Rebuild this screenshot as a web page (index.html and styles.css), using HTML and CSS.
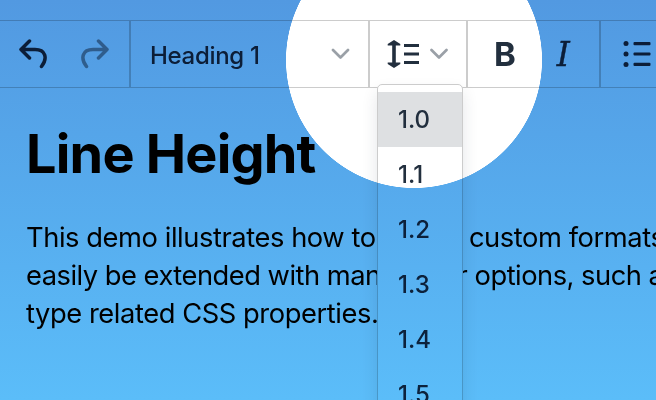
FILE: index.html
```html
<!DOCTYPE html>
<html lang="en">
<head>
<meta charset="utf-8">
<title>Line Height</title>
<link rel="stylesheet" href="styles.css">
</head>
<body>
<div class="stage">
  <div class="editor">
    <div class="toolbar">
      <div class="group history">
        <svg class="icon" width="30" height="32" viewBox="0 0 30 32"><path d="M11.500 3 3 11.500l8.500 8.500M3 11.500h14c10.500 0 13 8.500 6.500 17"/></svg>
        <svg class="icon faded" width="30" height="32" viewBox="0 0 30 32"><path d="M18.500 3 27 11.500 18.500 20M27 11.500H13c-10.500 0-13 8.500-6.500 17"/></svg>
      </div>
      <div class="group format">
        <span class="format-label">Heading 1</span>
        <svg class="chevron" width="20" height="14" viewBox="0 0 20 14"><path d="m3 3 7.500 7.500L18 3"/></svg>
      </div>
      <div class="group spacing">
        <svg class="solid" width="34" height="32" viewBox="0 0 34 32"><path d="M7 2 13.300 6v1.500H8.800v17h4.500V26L7 30 .700 26v-1.500h4.500v-17H.700V6zM17 6h15v3H17zM17 14.500h15v3H17zM17 23h15v3H17z"/></svg>
        <svg class="chevron" width="20" height="14" viewBox="0 0 20 14"><path d="m2.500 3 7.500 7.500L17.500 3"/></svg>
        <div class="menu">
          <div class="item selected">1.0</div>
          <div class="item">1.1</div>
          <div class="item">1.2</div>
          <div class="item">1.3</div>
          <div class="item">1.4</div>
          <div class="item">1.5</div>
        </div>
      </div>
      <div class="group styles">
        <span class="bold">B</span>
        <span class="italic">I</span>
      </div>
      <div class="group lists">
        <svg class="solid" width="30" height="28" viewBox="0 0 30 28"><circle cx="3" cy="3.500" r="2.500"/><circle cx="3" cy="14" r="2.500"/><circle cx="3" cy="24.500" r="2.500"/><rect x="10.500" y="2" width="17" height="3.200" rx="1"/><rect x="10.500" y="12.400" width="17" height="3.200" rx="1"/><rect x="10.500" y="22.800" width="17" height="3.200" rx="1"/></svg>
      </div>
    </div>
    <div class="content">
      <h1>Line Height</h1>
      <p><span class="line l1">This demo illustrates how to define custom formats</span><span class="line l2">easily be extended with many other options, such as</span><span class="line l3">type related CSS properties.</span></p>
    </div>
  </div>
</div>
</body>
</html>
```
FILE: styles.css
```css
* { box-sizing: border-box; }
body { margin: 0; font-family: Inter, "Liberation Sans", sans-serif; }
.stage {
  width: 656px; height: 400px; overflow: hidden; isolation: isolate;
  background: radial-gradient(circle at 414px 60px, #fff 127.700px, transparent 128.300px), linear-gradient(#5299e1, #5bbdf9);
}
.editor { height: 400px; padding-top: 20px; background: #fff; mix-blend-mode: multiply; overflow: hidden; }
.toolbar { display: flex; height: 68px; border: solid #ccc; border-width: 1.500px 0; color: #222f3e; }
.group { display: flex; align-items: center; flex: none; border-right: 2px solid #ccc; }
.history { width: 131px; padding-left: 17.500px; gap: 32px; }
.format { width: 239px; padding: 0 18px 0 19px; justify-content: space-between; }
.format-label { font-size: 24px; font-weight: 450; letter-spacing: -.3px; padding-top: 2px; }
.spacing { width: 98px; padding-left: 17px; gap: 8px; position: relative; }
.styles { width: 133px; padding-left: 26px; gap: 41px; }
.lists { padding-left: 22px; border: 0; }
.icon, .chevron { fill: none; stroke: #222f3e; stroke-width: 3.500; stroke-linecap: round; stroke-linejoin: round; }
.icon.faded { opacity: .5; }
.chevron { stroke-width: 2.700; opacity: .45; }
.solid { fill: #222f3e; }
.bold { font-size: 33px; font-weight: 650; }
.italic { font: italic 33px "DejaVu Serif", serif; -webkit-text-stroke: .4px #222f3e; }
.menu {
  position: absolute; left: 7px; top: 63px; width: 86px; padding-top: 7px; z-index: 1;
  background: #fff; border: 1.500px solid #ccc; border-radius: 5px; box-shadow: 0 8px 16px rgba(34,47,62,.12);
}
.item { height: 55px; line-height: 55px; padding-left: 20px; font-size: 24px; font-weight: 450; }
.selected { background: #dee0e2; }
.content { padding: 0 26px; color: #000; }
h1 { margin: 32px 0 0; font-size: 54px; line-height: 68px; font-weight: 700; letter-spacing: -.8px; white-space: nowrap; }
p { margin: 31px 0 0; font-size: 27.300px; line-height: 38px; letter-spacing: -.43px; white-space: nowrap; }
.line { display: block; }
.l2 { letter-spacing: -.5px; }
```
